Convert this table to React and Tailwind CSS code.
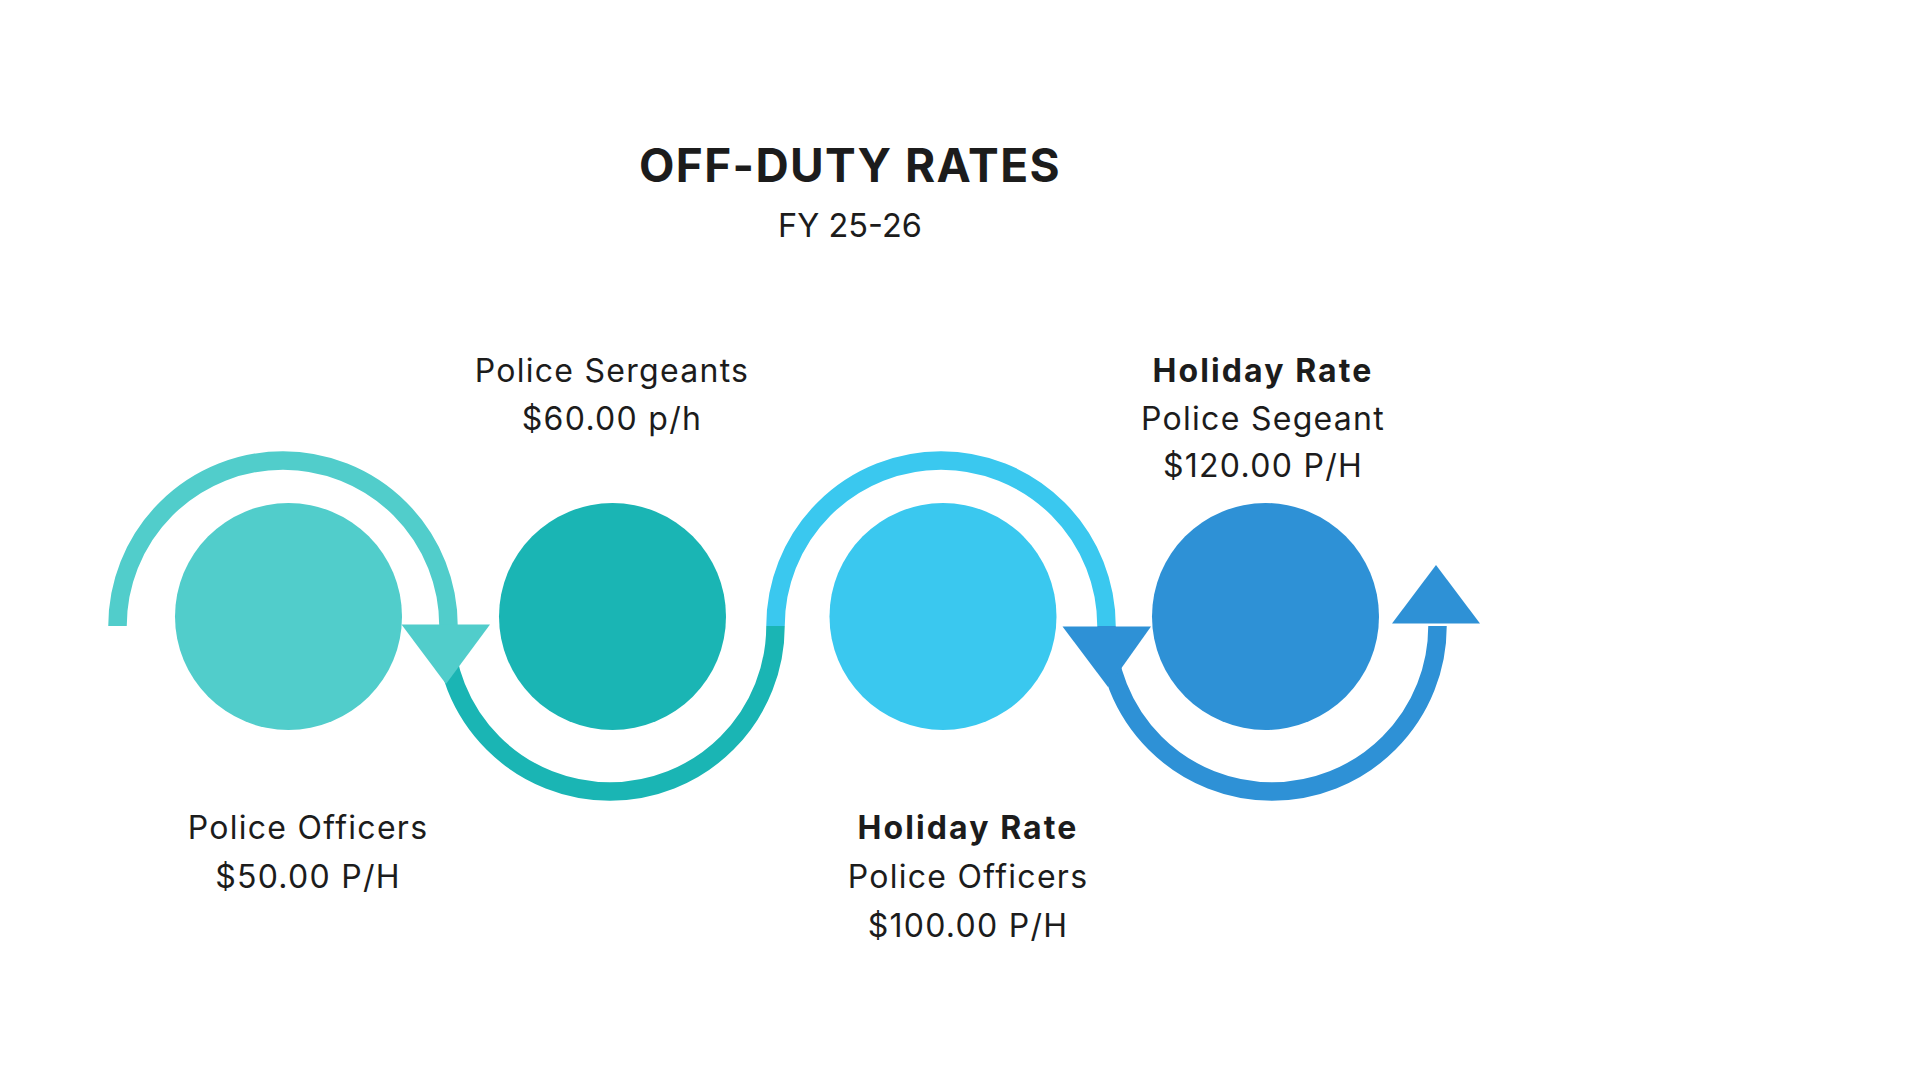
import React from "react";

const font = { fontFamily: "Inter, 'Noto Sans', sans-serif" };

// arcs drawn in page coordinates; the svg viewBox starts at the top of the diagram block
const arcs = [
  { d: "M 117.5 626 A 165.5 165.5 0 0 1 448.5 626", color: "#51cdcb" },
  { d: "M 444.5 626 A 165.5 165.5 0 0 0 775.5 626", color: "#1ab5b4" },
  { d: "M 775.5 626 A 165.5 165.5 0 0 1 1106.5 626", color: "#3ac8ef" },
  { d: "M 1106.5 626 A 165.5 165.5 0 0 0 1437.5 626", color: "#2e91d6" },
];

const circles = [
  { cx: 288.5, color: "#51cdcb" },
  { cx: 612.5, color: "#1ab5b4" },
  { cx: 943, color: "#3ac8ef" },
  { cx: 1265.5, color: "#2e91d6" },
];

const arrows = [
  { points: "401.5,624.5 490,624.5 446,684", color: "#51cdcb" },
  { points: "1062.5,626.5 1151,626.5 1108,687", color: "#2e91d6" },
  { points: "1392,623.5 1480,623.5 1436,565", color: "#2e91d6" },
];

function Diagram() {
  return (
    <svg
      className="col-start-1 row-start-1"
      width="1920"
      height="602"
      viewBox="0 347 1920 602"
    >
      {arcs.map((a) => (
        <path key={a.d} d={a.d} fill="none" stroke={a.color} strokeWidth="18.5" />
      ))}
      {circles.map((c) => (
        <circle key={c.cx} cx={c.cx} cy="616.5" r="113.5" fill={c.color} />
      ))}
      {arrows.map((a) => (
        <polygon key={a.points} points={a.points} fill={a.color} />
      ))}
    </svg>
  );
}

function Label({ title, lines, leading }) {
  return (
    <div
      className={`w-[300px] flex flex-col items-center text-[32px] tracking-[0.04em] text-[#1c1c1c] ${leading}`}
    >
      {title && <span className="font-bold tracking-[0.065em]">{title}</span>}
      {lines.map((l) => (
        <span key={l}>{l}</span>
      ))}
    </div>
  );
}

export default function App() {
  return (
    <div className="min-h-screen w-full bg-white" style={font}>
      <div className="pt-[137px] w-[1700px] flex flex-col items-center text-[#1c1c1c]">
        <h1 className="text-[46px] leading-[56px] font-bold tracking-[0.03em]">OFF-DUTY RATES</h1>
        <p className="mt-[11px] text-[32.5px] leading-[44px]">FY 25-26</p>
      </div>

      <div className="grid mt-[99px]">
        <Diagram />
        <div className="col-start-1 row-start-1 flex flex-col">
          <div className="flex items-start h-[144px] pl-[462px] gap-[351px]">
            <Label lines={["Police Sergeants", "$60.00 p/h"]} leading="leading-[48px]" />
            <Label
              title="Holiday Rate"
              lines={["Police Segeant", "$120.00 P/H"]}
              leading="leading-[47.5px]"
            />
          </div>
          <div className="flex items-start mt-[312px] pl-[158px] gap-[360px]">
            <Label lines={["Police Officers", "$50.00 P/H"]} leading="leading-[49px]" />
            <Label
              title="Holiday Rate"
              lines={["Police Officers", "$100.00 P/H"]}
              leading="leading-[49px]"
            />
          </div>
        </div>
      </div>
    </div>
  );
}
